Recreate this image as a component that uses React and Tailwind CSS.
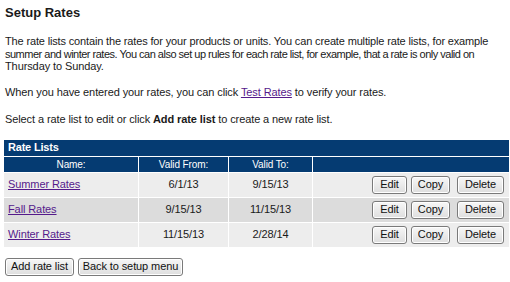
import React from 'react'

const rateLists = [
    { name: 'Summer Rates', from: '6/1/13', to: '9/15/13', bg: 'bg-[#ededed]' },
    { name: 'Fall Rates', from: '9/15/13', to: '11/15/13', bg: 'bg-[#dcdcdc]' },
    { name: 'Winter Rates', from: '11/15/13', to: '2/28/14', bg: 'bg-[#ededed]' },
]

function Btn({ children, className }) {
    return (
        <button
            type="button"
            className={'h-[18px] rounded-[3px] border border-[#7a7a7a] bg-gradient-to-b from-[#f7f7f7] to-[#dedede] shadow-[inset_0_0_0_1px_#ffffff] text-[11px] leading-none tracking-[-0.1px] text-[#111] ' + className}
        >
            {children}
        </button>
    )
}

function App() {
    return (
        <div className="min-h-[282px] bg-white pl-[5px] pr-[1px] pt-[4px] font-['Liberation_Sans',Arial,sans-serif] text-[11px] tracking-[-0.1px] text-[#1a1a1a]">
            <h1 className="text-[13px] font-bold leading-[18px] tracking-normal">Setup Rates</h1>

            <p className="mt-[13px] whitespace-nowrap leading-[12.5px]">
                <span className="tracking-[-0.15px]">The rate lists contain the rates for your products or units. You can create multiple rate lists, for example</span><br />
                <span className="tracking-[-0.5px]">summer and winter rates. You can also set up rules for each rate list, for example, that a rate is only valid on</span><br />
                Thursday to Sunday.
            </p>

            <p className="mt-[13px] leading-[13px]">
                When you have entered your rates, you can click <a href="#" className="text-[#551a8b] underline">Test Rates</a> to verify your rates.
            </p>

            <p className="mt-[14px] leading-[13px]">
                Select a rate list to edit or click <b>Add rate list</b> to create a new rate list.
            </p>

            <table className="-ml-[2px] mt-[13px] w-[507px] border-separate border-spacing-[1px] bg-white">
                <thead>
                    <tr>
                        <th colSpan={4} className="h-[16px] bg-[#053b72] px-[4px] text-left text-[11px] font-bold leading-none tracking-[-0.2px] text-white">
                            Rate Lists
                        </th>
                    </tr>
                    <tr className="bg-[#053b72] text-[10px] text-white">
                        <th className="h-[15px] w-[134px] font-normal">Name:</th>
                        <th className="w-[89px] font-normal">Valid From:</th>
                        <th className="w-[83px] font-normal">Valid To:</th>
                        <th className="font-normal"></th>
                    </tr>
                </thead>
                <tbody>
                    {rateLists.map((r) => (
                        <tr key={r.name} className={r.bg}>
                            <td className="h-[24px] px-[4px]">
                                <a href="#" className="text-[#551a8b] underline">{r.name}</a>
                            </td>
                            <td className="text-center">{r.from}</td>
                            <td className="text-center">{r.to}</td>
                            <td>
                                <div className="flex justify-end pr-[5px]">
                                    <Btn className="w-[35px]">Edit</Btn>
                                    <Btn className="ml-[4px] w-[39px]">Copy</Btn>
                                    <Btn className="ml-[7px] w-[47px]">Delete</Btn>
                                </div>
                            </td>
                        </tr>
                    ))}
                </tbody>
            </table>

            <div className="mt-[10px] flex gap-[4px]">
                <Btn className="w-[69px]">Add rate list</Btn>
                <Btn className="w-[105px]">Back to setup menu</Btn>
            </div>
        </div>
    )
}

export default App
